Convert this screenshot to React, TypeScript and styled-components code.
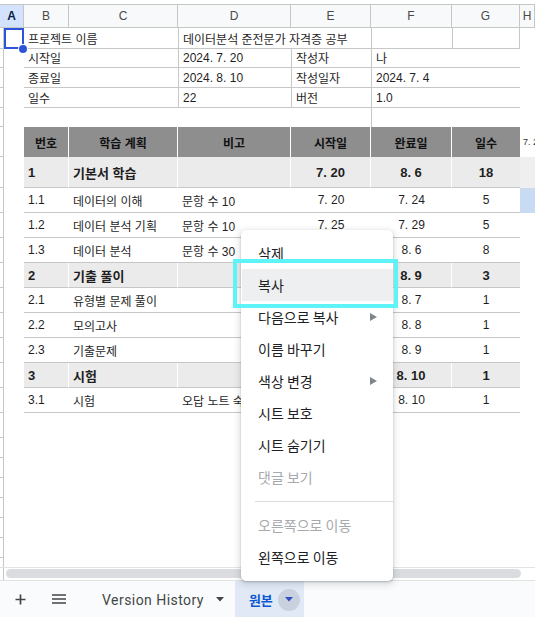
import React from 'react';
import styled, { createGlobalStyle } from 'styled-components';

const FONT = `"Liberation Sans", "Noto Sans CJK KR", Arial, sans-serif`;
const UI_FONT = `Roboto, "Noto Sans CJK KR", sans-serif`;
const COLS = '4px 20px 45px 109px 113px 80px 81px 68px 1fr';
const LINE = '#c7c7c7';

const GlobalStyle = createGlobalStyle`
  html, body { margin: 0; padding: 0; background: #fff; }
  body { font-family: ${FONT}; }
  *, *::before, *::after { box-sizing: border-box; }
`;

const Frame = styled.div`
  position: relative;
  width: 535px;
  height: 617px;
  overflow: hidden;
  display: flex;
  flex-direction: column;
  background: #fff;
`;

const Sheet = styled.div`
  flex: 1;
  overflow: hidden;
  padding-top: 4px;
  font-family: ${FONT};
  font-size: 12px;
  color: #1f1f1f;
`;

const Row = styled.div<{ $h: number }>`
  display: grid;
  grid-template-columns: ${COLS};
  height: ${p => p.$h}px;
`;

const Gutter = styled.div`
  border-right: 1px solid ${LINE};
  border-bottom: 1px solid ${LINE};
`;

const ColHead = styled.div<{ $active?: boolean; $span?: number }>`
  grid-column: span ${p => p.$span ?? 1};
  display: flex;
  align-items: center;
  justify-content: center;
  background: ${p => (p.$active ? '#d3e3fd' : '#f8f9fa')};
  border-top: 1px solid #c4c7c5;
  border-bottom: 1px solid #c4c7c5;
  border-right: 1px solid #c4c7c5;
  color: ${p => (p.$active ? '#0b1d44' : '#4a4a4a')};
  font-weight: ${p => (p.$active ? 700 : 400)};
  font-size: 12px;
  overflow: hidden;
`;

const Blank = styled.div<{ $bg?: string; $left?: boolean }>`
  background: ${p => p.$bg ?? 'transparent'};
  border-left: ${p => (p.$left ? `1px solid ${LINE}` : 'none')};
`;

const Selected = styled.div`
  position: relative;
  box-shadow: inset 0 0 0 2px #2d55d9;
  height: 21px;
`;

const Handle = styled.span`
  position: absolute;
  right: -3px;
  bottom: -4px;
  width: 8px;
  height: 8px;
  border-radius: 50%;
  background: #2d55d9;
  box-shadow: 0 0 0 1px #fff;
  z-index: 2;
`;

const InfoCell = styled.div<{ $span?: number; $left?: boolean; $right?: boolean }>`
  grid-column: span ${p => p.$span ?? 1};
  display: flex;
  align-items: center;
  padding: 0 4px;
  white-space: nowrap;
  overflow: hidden;
  border-bottom: 1px solid ${LINE};
  border-left: ${p => (p.$left ? `1px solid ${LINE}` : 'none')};
  border-right: ${p => (p.$right ? `1px solid ${LINE}` : 'none')};
`;

const HeadCell = styled.div<{ $last?: boolean }>`
  display: flex;
  align-items: center;
  justify-content: center;
  background: #8e8e8e;
  font-weight: 700;
  color: #111;
  border-right: ${p => (p.$last ? 'none' : '1px solid #fff')};
  white-space: nowrap;
`;

const TableCell = styled.div<{ $group?: boolean; $center?: boolean; $last?: boolean }>`
  display: flex;
  align-items: center;
  justify-content: ${p => (p.$center ? 'center' : 'flex-start')};
  padding: 0 4px;
  white-space: nowrap;
  overflow: hidden;
  background: ${p => (p.$group ? '#ebebeb' : '#fff')};
  font-weight: ${p => (p.$group ? 700 : 400)};
  font-size: ${p => (p.$group ? 13 : 12)}px;
  color: #1f1f1f;
  border-bottom: 1px solid ${LINE};
  border-right: ${p => (p.$group && !p.$last ? '1px solid #fff' : 'none')};
`;

const Peek = styled.div<{ $bg?: string }>`
  display: flex;
  align-items: center;
  padding-left: 3px;
  font-size: 9px;
  color: #333;
  white-space: nowrap;
  overflow: hidden;
  background: ${p => p.$bg ?? 'transparent'};
`;

const ScrollRow = styled.div`
  height: 13px;
  display: flex;
  border-top: 1px solid #e3e3e3;
`;

const ScrollGutter = styled.div`
  width: 4px;
  border-right: 1px solid ${LINE};
`;

const Track = styled.div`
  flex: 1;
  padding: 1px 14px 2px 2px;
`;

const Thumb = styled.div`
  height: 9px;
  border-radius: 5px;
  background: #dadce0;
`;

const TabBar = styled.div`
  height: 37px;
  display: flex;
  align-items: stretch;
  background: #f9fbfd;
  border-top: 1px solid #e1e3e1;
  font-family: ${UI_FONT};
`;

const IconButton = styled.div<{ $w: number }>`
  width: ${p => p.$w}px;
  display: flex;
  align-items: center;
  justify-content: center;
  color: #444746;
`;

const SheetTab = styled.div<{ $active?: boolean }>`
  display: flex;
  align-items: center;
  padding: 1px ${p => (p.$active ? 4 : 11)}px 0 14px;
  margin-left: ${p => (p.$active ? 0 : 10)}px;
  gap: ${p => (p.$active ? 5 : 12)}px;
  background: ${p => (p.$active ? '#e1e9f7' : 'transparent')};
  color: ${p => (p.$active ? '#0b57d0' : '#444746')};
  font-size: ${p => (p.$active ? 13 : 14)}px;
  font-weight: ${p => (p.$active ? 700 : 400)};
  letter-spacing: ${p => (p.$active ? 0 : 0.45)}px;
  white-space: nowrap;
`;

const CaretCircle = styled.span`
  width: 22px;
  height: 22px;
  border-radius: 50%;
  background: #c9d1df;
  display: flex;
  align-items: center;
  justify-content: center;
`;

const Menu = styled.div`
  position: absolute;
  left: 241px;
  top: 230px;
  width: 152px;
  padding: 7px 0 8px;
  background: #fff;
  border-radius: 5px;
  box-shadow: 0 2px 6px 2px rgba(60, 64, 67, 0.15), 0 1px 2px rgba(60, 64, 67, 0.3);
  font-family: "Noto Sans CJK KR", ${UI_FONT};
  font-size: 14px;
  z-index: 5;
`;

const MenuItem = styled.div<{ $active?: boolean; $disabled?: boolean }>`
  height: 32px;
  display: flex;
  align-items: center;
  justify-content: space-between;
  padding: 0 16px;
  margin-left: 1px;
  color: ${p => (p.$disabled ? '#a6a9ad' : '#202124')};
  background: ${p => (p.$active ? '#eeeff1' : 'transparent')};
  white-space: nowrap;
`;

const Divider = styled.div`
  margin: 8px 0 7px 14px;
  border-top: 1px solid #dadce0;
`;

const Highlight = styled.div`
  position: absolute;
  left: 233px;
  top: 259px;
  width: 165px;
  height: 49px;
  border: 4px solid #5ef4f7;
  z-index: 6;
`;

type Item = {
  no: string; plan: string; note: string; start: string; end: string; days: string;
  group?: boolean; h: number; tail?: string;
};

const items: Item[] = [
  { no: '1', plan: '기본서 학습', note: '', start: '7. 20', end: '8. 6', days: '18', group: true, h: 31, tail: '#efefef' },
  { no: '1.1', plan: '데이터의 이해', note: '문항 수 10', start: '7. 20', end: '7. 24', days: '5', h: 25, tail: '#c9daf3' },
  { no: '1.2', plan: '데이터 분석 기획', note: '문항 수 10', start: '7. 25', end: '7. 29', days: '5', h: 25 },
  { no: '1.3', plan: '데이터 분석', note: '문항 수 30', start: '7. 30', end: '8. 6', days: '8', h: 25 },
  { no: '2', plan: '기출 풀이', note: '', start: '8. 7', end: '8. 9', days: '3', group: true, h: 25 },
  { no: '2.1', plan: '유형별 문제 풀이', note: '', start: '8. 7', end: '8. 7', days: '1', h: 25 },
  { no: '2.2', plan: '모의고사', note: '', start: '8. 8', end: '8. 8', days: '1', h: 25 },
  { no: '2.3', plan: '기출문제', note: '', start: '8. 9', end: '8. 9', days: '1', h: 25 },
  { no: '3', plan: '시험', note: '', start: '8. 10', end: '8. 10', days: '1', group: true, h: 25 },
  { no: '3.1', plan: '시험', note: '오답 노트 숙지', start: '8. 10', end: '8. 10', days: '1', h: 25 },
];

const info: [string, string, string, string][] = [
  ['시작일', '2024. 7. 20', '작성자', '나'],
  ['종료일', '2024. 8. 10', '작성일자', '2024. 7. 4'],
  ['일수', '22', '버전', '1.0'],
];

const emptyRows = [25, 20, 20, 20, 20, 20, 20, 20];

const Arrow = () => (
  <svg width="7" height="8" viewBox="0 0 7 8">
    <polygon points="0,0 7,4 0,8" fill="#80868b" />
  </svg>
);

const Caret = ({ color }: { color: string }) => (
  <svg width="8" height="5" viewBox="0 0 8 5">
    <polygon points="0,0 8,0 4,4.5" fill={color} />
  </svg>
);

export default function App() {
  return (
    <Frame>
      <GlobalStyle />
      <Sheet>
        <Row $h={24}>
          <ColHead $active $span={2}>A</ColHead>
          {['B', 'C', 'D', 'E', 'F', 'G', 'H'].map(c => (
            <ColHead key={c}>{c}</ColHead>
          ))}
        </Row>
        <Row $h={20}>
          <Gutter />
          <Selected><Handle /></Selected>
          <InfoCell $span={2}>프로젝트 이름</InfoCell>
          <InfoCell $span={2} $left>데이터분석 준전문가 자격증 공부</InfoCell>
          <InfoCell $left />
          <InfoCell $left $right />
          <Blank />
        </Row>
        {info.map(([a, b, c, d]) => (
          <Row $h={20} key={a}>
            <Gutter />
            <Blank />
            <InfoCell $span={2}>{a}</InfoCell>
            <InfoCell $left>{b}</InfoCell>
            <InfoCell $left>{c}</InfoCell>
            <InfoCell $left $span={2}>{d}</InfoCell>
            <Blank />
          </Row>
        ))}
        <Row $h={19}>
          <Gutter />
          <Blank /><Blank /><Blank /><Blank /><Blank />
          <Blank $left />
          <Blank /><Blank />
        </Row>
        <Row $h={30}>
          <Gutter />
          <Blank />
          <HeadCell>번호</HeadCell>
          <HeadCell>학습 계획</HeadCell>
          <HeadCell>비고</HeadCell>
          <HeadCell>시작일</HeadCell>
          <HeadCell>완료일</HeadCell>
          <HeadCell $last>일수</HeadCell>
          <Peek>7. 20</Peek>
        </Row>
        {items.map(it => (
          <Row $h={it.h} key={it.no}>
            <Gutter />
            <Blank />
            <TableCell $group={it.group}>{it.no}</TableCell>
            <TableCell $group={it.group}>{it.plan}</TableCell>
            <TableCell $group={it.group}>{it.note}</TableCell>
            <TableCell $group={it.group} $center>{it.start}</TableCell>
            <TableCell $group={it.group} $center>{it.end}</TableCell>
            <TableCell $group={it.group} $center $last>{it.days}</TableCell>
            <Peek $bg={it.tail} />
          </Row>
        ))}
        {emptyRows.map((h, i) => (
          <Row $h={h} key={i}>
            <Gutter />
          </Row>
        ))}
      </Sheet>
      <ScrollRow>
        <ScrollGutter />
        <Track><Thumb /></Track>
      </ScrollRow>
      <TabBar>
        <IconButton $w={40}>
          <svg width="11" height="11" viewBox="0 0 11 11">
            <path d="M5.5 0.5v10M0.5 5.5h10" stroke="#444746" strokeWidth="1.7" />
          </svg>
        </IconButton>
        <IconButton $w={38}>
          <svg width="14" height="10" viewBox="0 0 14 10">
            <path d="M0 1h14M0 5h14M0 9h14" stroke="#444746" strokeWidth="1.4" />
          </svg>
        </IconButton>
        <SheetTab>
          <span>Version History</span>
          <Caret color="#444746" />
        </SheetTab>
        <SheetTab $active>
          <span>원본</span>
          <CaretCircle><Caret color="#2f4fc4" /></CaretCircle>
        </SheetTab>
      </TabBar>
      <Menu>
        <MenuItem>삭제</MenuItem>
        <MenuItem $active>복사</MenuItem>
        <MenuItem>다음으로 복사<Arrow /></MenuItem>
        <MenuItem>이름 바꾸기</MenuItem>
        <MenuItem>색상 변경<Arrow /></MenuItem>
        <MenuItem>시트 보호</MenuItem>
        <MenuItem>시트 숨기기</MenuItem>
        <MenuItem $disabled>댓글 보기</MenuItem>
        <Divider />
        <MenuItem $disabled>오른쪽으로 이동</MenuItem>
        <MenuItem>왼쪽으로 이동</MenuItem>
      </Menu>
      <Highlight />
    </Frame>
  );
}
